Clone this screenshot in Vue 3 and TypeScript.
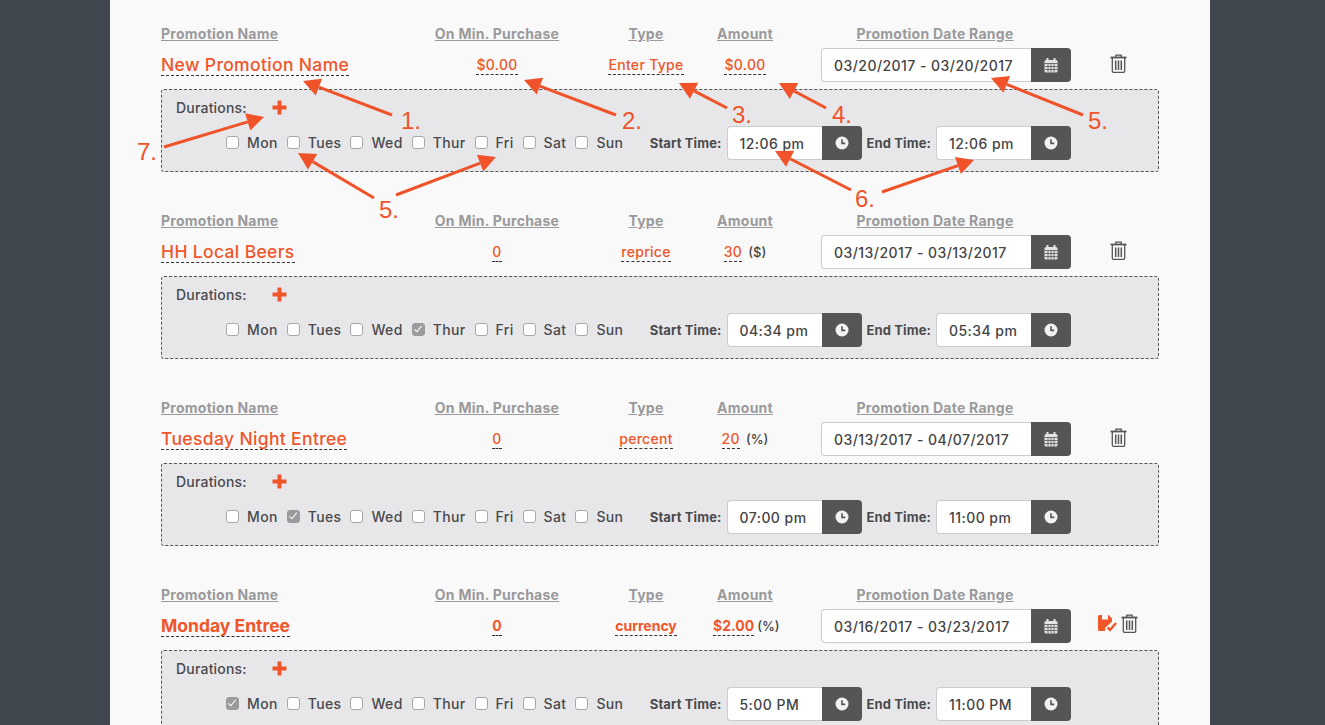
<script setup lang="ts">
// promotion rows
const days = ['Mon', 'Tues', 'Wed', 'Thur', 'Fri', 'Sat', 'Sun']

const promotions = [
  { id: 1, name: 'New Promotion Name', min: '$0.00', type: 'Enter Type', amount: '$0.00', unit: '', range: '03/20/2017 - 03/20/2017', day: '', start: '12:06 pm', end: '12:06 pm', dirty: false },
  { id: 2, name: 'HH Local Beers', min: '0', type: 'reprice', amount: '30', unit: '($)', range: '03/13/2017 - 03/13/2017', day: 'Thur', start: '04:34 pm', end: '05:34 pm', dirty: false },
  { id: 3, name: 'Tuesday Night Entree', min: '0', type: 'percent', amount: '20', unit: '(%)', range: '03/13/2017 - 04/07/2017', day: 'Tues', start: '07:00 pm', end: '11:00 pm', dirty: false },
  { id: 4, name: 'Monday Entree', min: '0', type: 'currency', amount: '$2.00', unit: '(%)', range: '03/16/2017 - 03/23/2017', day: 'Mon', start: '5:00 PM', end: '11:00 PM', dirty: true }
]

// annotation arrows drawn over the first row
const arrows = [
  [392, 115, 303, 81],
  [616, 115, 524, 80],
  [727, 108, 679, 83],
  [826, 108, 779, 83],
  [1083, 115, 991, 78],
  [851, 190, 775, 151],
  [882, 192, 974, 160],
  [164, 147, 264, 117],
  [374, 198, 298, 153],
  [396, 195, 496, 157]
].map(([x1, y1, x2, y2]) => {
  const len = Math.hypot(x2 - x1, y2 - y1)
  const ux = (x2 - x1) / len
  const uy = (y2 - y1) / len
  const bx = x2 - ux * 17
  const by = y2 - uy * 17
  return {
    x1,
    y1,
    x2: bx,
    y2: by,
    head: `${x2},${y2} ${bx - uy * 9},${by + ux * 9} ${bx + uy * 9},${by - ux * 9}`
  }
})

const marks = [
  { label: '1.', x: 401, y: 129 },
  { label: '2.', x: 622, y: 129 },
  { label: '3.', x: 732, y: 123 },
  { label: '4.', x: 832, y: 123 },
  { label: '5.', x: 1088, y: 129 },
  { label: '6.', x: 855, y: 207 },
  { label: '7.', x: 137, y: 160 },
  { label: '5.', x: 379, y: 218 }
]
</script>

<template>
  <div class="page">
    <main class="panel">
      <section v-for="promo in promotions" :key="promo.id" class="promo" :class="{ dirty: promo.dirty }">
        <div class="grid heads">
          <span class="left"><u>Promotion Name</u></span>
          <span><u>On Min. Purchase</u></span>
          <span><u>Type</u></span>
          <span><u>Amount</u></span>
          <span class="range-head"><u>Promotion Date Range</u></span>
        </div>

        <div class="grid values">
          <div class="left"><a class="edit name">{{ promo.name }}</a></div>
          <div><a class="edit">{{ promo.min }}</a></div>
          <div><a class="edit">{{ promo.type }}</a></div>
          <div class="amount"><a class="edit">{{ promo.amount }}</a><span v-if="promo.unit" class="unit">{{ promo.unit }}</span></div>
          <div class="picker range">
            <input type="text" readonly :value="promo.range">
            <button type="button">
              <svg width="14" height="15" viewBox="0 0 14 15">
                <rect x="0.5" y="2" width="13" height="12.5" rx="1.5" fill="#e4e4e4" />
                <path d="M3.5 0.5v3M10.5 0.5v3" stroke="#e4e4e4" stroke-width="2" stroke-linecap="round" />
                <path d="M0.5 5.5h13M0.5 8.5h13M0.5 11.5h13M4 5.5v9M7 5.5v9M10 5.5v9" stroke="#555" stroke-width="0.8" />
              </svg>
            </button>
          </div>
          <div class="actions">
            <svg v-if="promo.dirty" class="save" width="19" height="17" viewBox="0 0 19 17">
              <path d="M0 1.5A1.5 1.5 0 0 1 1.5 0H4v4.5h6V0h0.5L14 3.5V6.5L7 13v3H1.5A1.5 1.5 0 0 1 0 14.5Z" fill="#f0562a" />
              <path d="M9.5 12.5l2.5 2.5 6-7" fill="none" stroke="#f0562a" stroke-width="2.4" />
            </svg>
            <svg width="17" height="19" viewBox="0 0 17 19" fill="none" stroke="#555" stroke-width="1.3">
              <path d="M5.8 3V1.2h5.4V3" />
              <path d="M0.5 3.5h16" stroke-width="1.8" />
              <path d="M2.3 4v13a1.4 1.4 0 0 0 1.4 1.4h9.6a1.4 1.4 0 0 0 1.4-1.4V4" />
              <path d="M5.7 6.5v9.5M8.5 6.5v9.5M11.3 6.5v9.5" stroke-width="1.5" />
            </svg>
          </div>
        </div>

        <div class="durations">
          <div class="durations-head">
            <span class="durations-label">Durations:</span>
            <svg width="15" height="15" viewBox="0 0 15 15">
              <path d="M5.5 0.5h4v5h5v4h-5v5h-4v-5h-5v-4h5Z" fill="#f0562a" />
            </svg>
          </div>
          <div class="durations-row">
            <div class="days">
              <label v-for="d in days" :key="d" class="day">
                <input type="checkbox" :checked="promo.day === d">
                <span>{{ d }}</span>
              </label>
            </div>
            <div class="times">
              <template v-for="t in [{ label: 'Start Time:', value: promo.start }, { label: 'End Time:', value: promo.end }]" :key="t.label">
                <span class="time-label">{{ t.label }}</span>
                <div class="picker time">
                  <input type="text" readonly :value="t.value">
                  <button type="button">
                    <svg width="14" height="14" viewBox="0 0 14 14">
                      <circle cx="7" cy="7" r="6.5" fill="#f2f2f2" />
                      <path d="M7 3.2V7.4H10.2" fill="none" stroke="#555" stroke-width="1.6" />
                    </svg>
                  </button>
                </div>
              </template>
            </div>
          </div>
        </div>
      </section>
    </main>

    <svg class="notes" width="1325" height="725">
      <g v-for="(a, i) in arrows" :key="i">
        <line :x1="a.x1" :y1="a.y1" :x2="a.x2" :y2="a.y2" stroke="#f0532a" stroke-width="3" />
        <polygon :points="a.head" fill="#f0532a" />
      </g>
      <text v-for="(m, i) in marks" :key="'m' + i" :x="m.x" :y="m.y" class="mark">{{ m.label }}</text>
    </svg>
  </div>
</template>

<style>
html,
body {
  margin: 0;
  height: 100%;
  overflow: hidden;
  background: #40474f;
}
</style>

<style scoped>
.page {
  position: relative;
  height: 725px;
  overflow: hidden;
  font-family: Inter, "Noto Sans", sans-serif;
  color: #4a4a4d;
}

.panel {
  width: 1100px;
  height: 725px;
  margin-left: 110px;
  padding: 24px 51px 0;
  box-sizing: border-box;
  background: #f9f9f9;
  display: flex;
  flex-direction: column;
  gap: 39px;
}

.promo {
  flex-shrink: 0;
}

.grid {
  display: grid;
  grid-template-columns: 254px 164px 134px 64px 44px 250px 1fr;
  align-items: center;
  text-align: center;
}

.grid > :nth-child(5) {
  grid-column: 6;
}

.left {
  text-align: left;
}

/* headers */
.heads {
  height: 18px;
  margin-bottom: 6px;
  font-size: 14px;
  font-weight: 700;
  color: #9a9a9c;
  letter-spacing: 0.25px;
  white-space: nowrap;
}

.range-head {
  padding-right: 22px;
}

.values {
  height: 34px;
  margin-bottom: 7px;
  font-size: 14px;
}

.edit {
  display: inline-block;
  color: #f0562a;
  font-weight: 500;
  letter-spacing: 0.3px;
  line-height: 18px;
  border-bottom: 1px dashed #333;
}

.name {
  font-size: 17.5px;
  line-height: 21px;
  letter-spacing: 0.35px;
}

.dirty .edit {
  font-weight: 700;
  letter-spacing: 0;
}

.amount {
  white-space: nowrap;
}

.unit {
  margin-left: 6px;
  font-size: 13px;
  font-weight: 500;
  color: #444;
}

.dirty .unit {
  margin-left: 3px;
}

/* pickers */
.picker {
  display: flex;
  height: 34px;
}

.picker input {
  flex: 1;
  min-width: 0;
  box-sizing: border-box;
  padding: 0 0 0 12px;
  border: 1px solid #ccc;
  border-right: 0;
  border-radius: 4px 0 0 4px;
  outline: none;
  background: #fff;
  font: 500 14px Inter, "Noto Sans", sans-serif;
  letter-spacing: 0.45px;
  color: #444;
}

.picker button {
  width: 40px;
  padding: 0;
  border: 0;
  border-radius: 0 4px 4px 0;
  background: #555;
  display: flex;
  align-items: center;
  justify-content: center;
}

.time {
  width: 135px;
}

.actions {
  display: flex;
  align-items: center;
  gap: 4px;
  padding-left: 39px;
  margin-top: -3px;
}

.dirty .actions {
  padding-left: 27px;
  margin-top: -5px;
}

/* durations box */
.durations {
  box-sizing: border-box;
  height: 83px;
  padding: 7px 87px 11px 14px;
  border: 1px dashed #555;
  border-radius: 3px;
  background: #e7e7e9;
}

.durations-head {
  display: flex;
  align-items: center;
  height: 20px;
  margin-bottom: 9px;
}

.durations-label {
  width: 96px;
  font-size: 14px;
  font-weight: 500;
  letter-spacing: 0.2px;
}

.durations-row {
  display: flex;
  justify-content: space-between;
  align-items: center;
  height: 34px;
  padding-left: 50px;
}

.days {
  display: flex;
  gap: 9px;
  margin-top: -2px;
}

.day {
  display: flex;
  align-items: center;
  gap: 8px;
  font-size: 14px;
  font-weight: 500;
  letter-spacing: 0.35px;
}

.day input {
  appearance: none;
  position: relative;
  width: 13px;
  height: 13px;
  margin: 0;
  border: 1px solid #a8a8a8;
  border-radius: 3px;
  background: #fff;
}

.day input:checked {
  background: #9b9b9d;
  border-color: #9b9b9d;
}

.day input:checked::after {
  content: "";
  position: absolute;
  left: 3px;
  top: 0;
  width: 3px;
  height: 7px;
  border: solid #fff;
  border-width: 0 1.5px 1.5px 0;
  transform: rotate(40deg);
}

.times {
  display: flex;
  align-items: center;
  gap: 5px;
}

.time-label {
  font-size: 13px;
  font-weight: 700;
  letter-spacing: 0.12px;
}

/* annotations */
.notes {
  position: absolute;
  left: 0;
  top: 0;
  pointer-events: none;
}

.mark {
  font-family: "Liberation Sans", Arial, sans-serif;
  font-size: 24px;
  fill: #f0532a;
}
</style>
